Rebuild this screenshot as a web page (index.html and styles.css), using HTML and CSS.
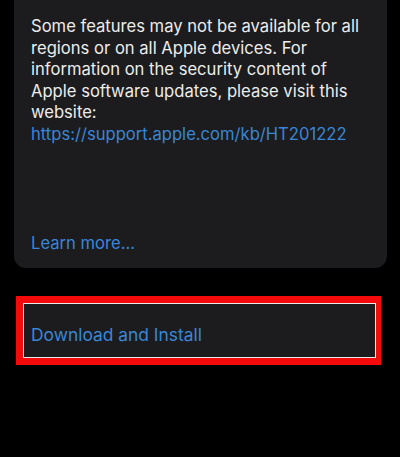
FILE: index.html
```html
<!DOCTYPE html>
<html>
<head>
<meta charset="utf-8">
<link rel="stylesheet" href="styles.css">
</head>
<body>
<div class="screen">
  <div class="card">
    <p class="notes">Some features may not be available for all regions or on all Apple devices. For information on the security content of Apple software updates, please visit this website: <span class="link">https://support.apple.com/kb/HT201222</span></p>
    <div class="learn link">Learn more...</div>
  </div>
  <div class="action">
    <div class="action-inner">
      <span class="link">Download and Install</span>
    </div>
  </div>
</div>
</body>
</html>
```
FILE: styles.css
```css
html, body {
  margin: 0;
  padding: 0;
  background: #000;
}
.screen {
  width: 400px;
  height: 457px;
  background: #000;
  font-family: Inter, "Liberation Sans", sans-serif;
  display: flex;
  flex-direction: column;
}
.card {
  margin: 0 13px 0 14px;
  background: #1c1c1e;
  border-radius: 0 0 12px 12px;
  padding: 16px 17px 14px 17px;
}
.notes {
  margin: 0;
  font-size: 16.6px;
  line-height: 21.6px;
  color: #ececec;
  letter-spacing: 0;
}
.link {
  color: #3a86d6;
}
.learn {
  margin-top: 86px;
  font-size: 16.6px;
  line-height: 22px;
}
.action {
  margin: 28px 19px 0 16px;
  height: 69px;
  box-sizing: border-box;
  border-style: solid;
  border-color: #f40a0a;
  border-width: 7px 5px 7px 7px;
  background: #e8e8e8;
  padding: 1px;
}
.action-inner {
  height: 100%;
  background: #1c1c1e;
  display: flex;
  align-items: center;
  padding-left: 7px;
  font-size: 17.4px;
  padding-top: 8px;
  box-sizing: border-box;
}
```
